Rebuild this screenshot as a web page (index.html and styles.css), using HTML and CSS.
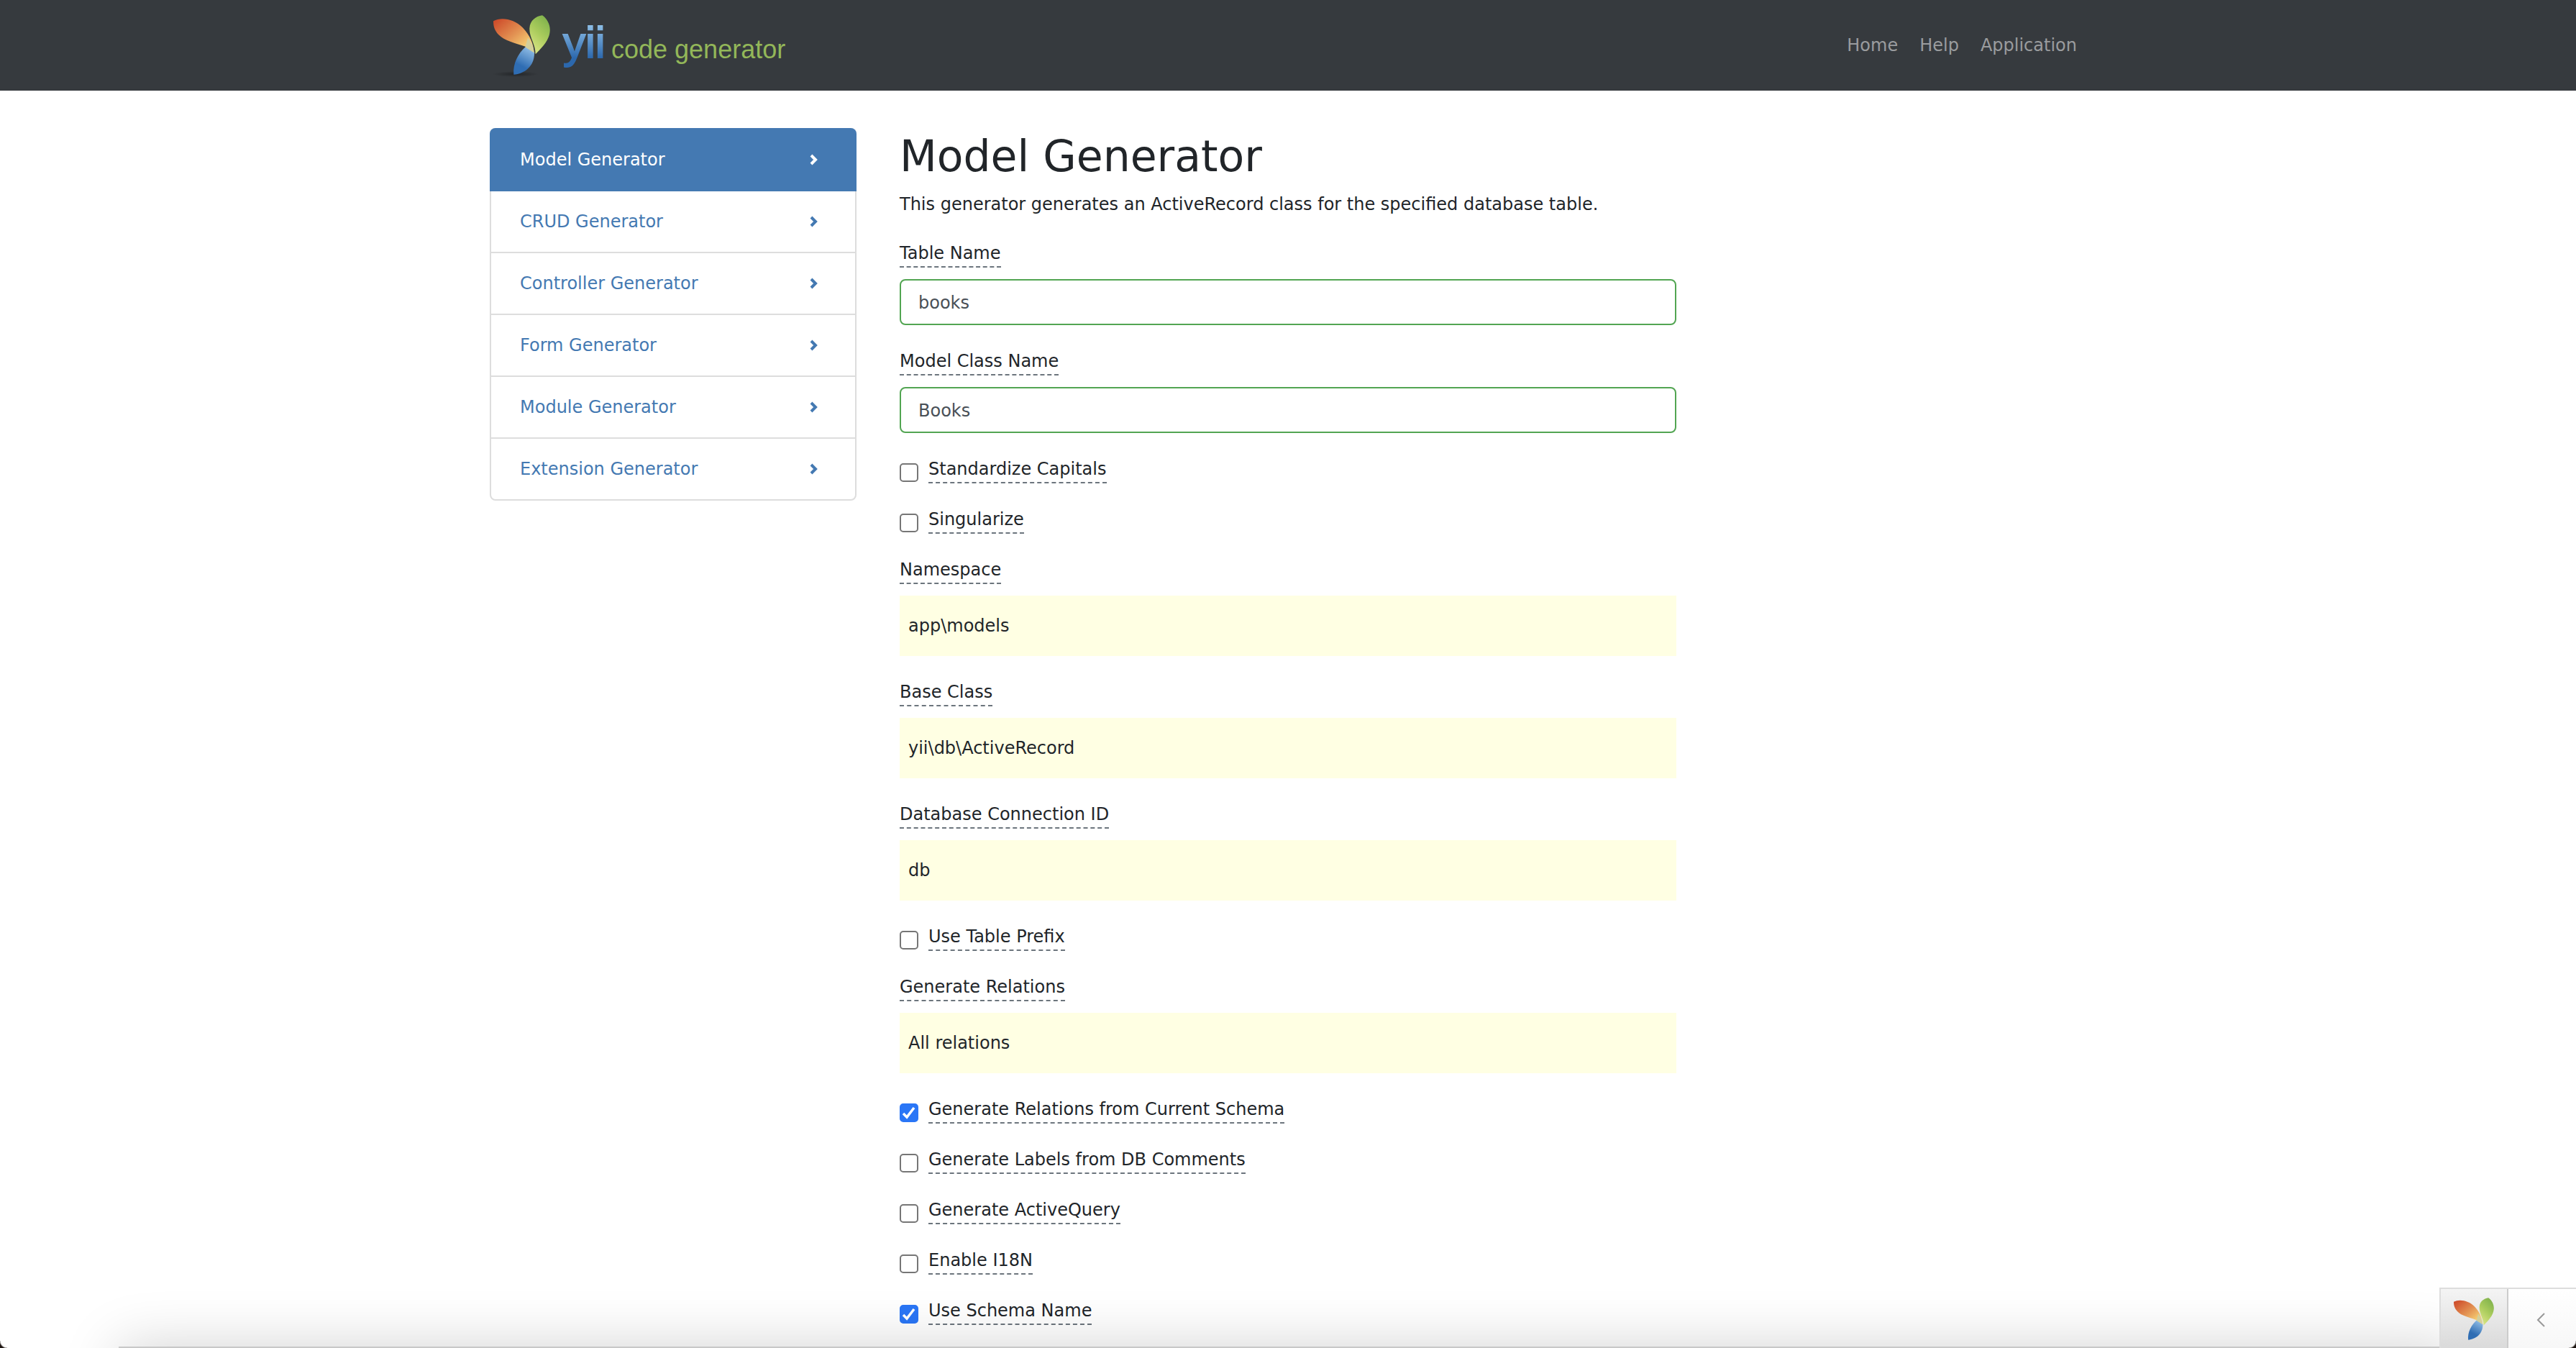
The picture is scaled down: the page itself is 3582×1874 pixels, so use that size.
FILE: index.html
```html
<!DOCTYPE html>
<html lang="en">
<head>
<meta charset="utf-8">
<title>Model Generator</title>
<link rel="stylesheet" href="styles.css">
</head>
<body>
<svg class="defs" aria-hidden="true">
  <defs>
    <linearGradient id="orange" x1="0" y1="0" x2="1" y2="1"><stop offset="0" stop-color="#cc4426"/><stop offset=".5" stop-color="#e39454"/><stop offset=".9" stop-color="#fbe07c"/></linearGradient>
    <linearGradient id="green" x1=".8" y1="0" x2=".3" y2="1"><stop offset="0" stop-color="#7db04b"/><stop offset=".5" stop-color="#a9cb5c"/><stop offset="1" stop-color="#dbe585"/></linearGradient>
    <linearGradient id="blue" x1=".7" y1="0" x2=".3" y2="1"><stop offset="0" stop-color="#8fbce5"/><stop offset=".7" stop-color="#2f6db3"/><stop offset="1" stop-color="#2f6db3"/></linearGradient>
    <linearGradient id="word" gradientUnits="userSpaceOnUse" x1="0" y1="34" x2="0" y2="86"><stop offset="0" stop-color="#8fc0e8"/><stop offset=".9" stop-color="#2c68ad"/></linearGradient>
    <radialGradient id="shade"><stop offset="0" stop-color="#000" stop-opacity=".35"/><stop offset="1" stop-color="#000" stop-opacity="0"/></radialGradient>
    <symbol id="leaves" viewBox="78 64 237 248">
      <path fill="url(#orange)" d="M78 88C112 70 165 80 200 115C232 148 246 185 248 220C238 208 225 200 212 195C160 176 127 172 100 145C82 126 78 108 78 88Z"/>
      <path fill="url(#blue)" d="M211 197C183 222 158 265 163 312C206 308 250 278 249 220C238 207 225 200 211 197Z"/>
      <path fill="#d3cf9c" d="M222 158L211 197L248 221C247 198 236 176 222 158Z"/>
      <path fill="url(#green)" d="M282 64C303 78 316 105 314 130C312 168 278 202 254 226C254 185 227 155 229 118C231 85 255 68 282 64Z"/>
    </symbol>
  </defs>
</svg>

<header class="navbar">
  <div class="container navbar-inner">
    <a class="brand" href="#" aria-label="Yii code generator">
      <svg width="440" height="126" viewBox="0 0 440 126">
        <ellipse cx="36" cy="103" rx="32" ry="4" fill="url(#shade)"/>
        <use href="#leaves" x="5" y="21" width="79" height="83"/>
        <text class="word-yii" x="102" y="80">yii</text>
        <text class="word-code" x="169" y="81">code generator</text>
      </svg>
    </a>
    <nav class="nav">
      <a href="#">Home</a>
      <a href="#">Help</a>
      <a href="#">Application</a>
    </nav>
  </div>
</header>

<div class="container page">
  <aside class="sidebar">
    <nav class="menu">
      <a class="menu-item active" href="#">Model Generator<svg class="chevron" viewBox="0 0 12 16"><path d="M3 2l6 6l-6 6"/></svg></a>
      <a class="menu-item" href="#">CRUD Generator<svg class="chevron" viewBox="0 0 12 16"><path d="M3 2l6 6l-6 6"/></svg></a>
      <a class="menu-item" href="#">Controller Generator<svg class="chevron" viewBox="0 0 12 16"><path d="M3 2l6 6l-6 6"/></svg></a>
      <a class="menu-item" href="#">Form Generator<svg class="chevron" viewBox="0 0 12 16"><path d="M3 2l6 6l-6 6"/></svg></a>
      <a class="menu-item" href="#">Module Generator<svg class="chevron" viewBox="0 0 12 16"><path d="M3 2l6 6l-6 6"/></svg></a>
      <a class="menu-item" href="#">Extension Generator<svg class="chevron" viewBox="0 0 12 16"><path d="M3 2l6 6l-6 6"/></svg></a>
    </nav>
  </aside>
  <main class="content">
    <h1>Model Generator</h1>
    <p class="lead">This generator generates an ActiveRecord class for the specified database table.</p>
    <form class="form">
      <div class="field">
        <label class="help" for="table">Table Name</label>
        <input class="text-input" id="table" type="text" value="books">
      </div>
      <div class="field">
        <label class="help" for="model">Model Class Name</label>
        <input class="text-input" id="model" type="text" value="Books">
      </div>
      <div class="check">
        <input id="capitals" type="checkbox"><label class="help" for="capitals">Standardize Capitals</label>
      </div>
      <div class="check">
        <input id="singular" type="checkbox"><label class="help" for="singular">Singularize</label>
      </div>
      <div class="field">
        <label class="help" for="ns">Namespace</label>
        <output class="sticky-value" id="ns">app\models</output>
      </div>
      <div class="field">
        <label class="help" for="base">Base Class</label>
        <output class="sticky-value" id="base">yii\db\ActiveRecord</output>
      </div>
      <div class="field">
        <label class="help" for="db">Database Connection ID</label>
        <output class="sticky-value" id="db">db</output>
      </div>
      <div class="check">
        <input id="prefix" type="checkbox"><label class="help" for="prefix">Use Table Prefix</label>
      </div>
      <div class="field">
        <label class="help" for="relations">Generate Relations</label>
        <output class="sticky-value" id="relations">All relations</output>
      </div>
      <div class="check">
        <input id="current" type="checkbox" checked><label class="help" for="current">Generate Relations from Current Schema</label>
      </div>
      <div class="check">
        <input id="comments" type="checkbox"><label class="help" for="comments">Generate Labels from DB Comments</label>
      </div>
      <div class="check">
        <input id="query" type="checkbox"><label class="help" for="query">Generate ActiveQuery</label>
      </div>
      <div class="check">
        <input id="i18n" type="checkbox"><label class="help" for="i18n">Enable I18N</label>
      </div>
      <div class="check">
        <input id="schema" type="checkbox" checked><label class="help" for="schema">Use Schema Name</label>
      </div>
    </form>
  </main>
</div>

<div class="bottom-shadow"></div>
<div class="debug-bar">
  <a class="debug-logo" href="#" aria-label="Yii debugger"><svg width="56" height="59"><use href="#leaves"/></svg></a>
  <button class="debug-toggle" type="button" aria-label="Open toolbar"><svg width="12" height="20" viewBox="0 0 12 20"><path d="M11 1L2 10L11 19"/></svg></button>
</div>
<div class="window-corners"></div>
</body>
</html>
```
FILE: styles.css
```css
* { box-sizing: border-box; }

body {
  margin: 0;
  min-height: 100vh;
  background: #fff;
  color: #212529;
  font: 24px/36px Verdana, "DejaVu Sans", sans-serif;
}

a { text-decoration: none; }

.defs { position: absolute; width: 0; height: 0; }

.container {
  max-width: 2280px;
  margin: 0 auto;
}

.navbar { background: #363a3e; }

.navbar-inner {
  display: flex;
  justify-content: space-between;
  align-items: center;
  padding: 0 28px 0 30px;
}

.brand svg { display: block; }

.word-yii {
  font: 62px "Liberation Sans", sans-serif;
  fill: url(#word);
  stroke: url(#word);
  stroke-width: 2px;
}

.word-code {
  font: 36px "Liberation Sans", sans-serif;
  fill: #93b759;
}

.nav { display: flex; }

.nav a {
  padding: 0 15px;
  color: #9a9c9e;
}

.page {
  display: flex;
  padding-top: 52px;
}

.sidebar {
  flex: 0 0 25%;
  padding: 0 30px;
}

.menu {
  border: 2px solid #ddd;
  border-radius: 8px;
}

.menu-item {
  display: flex;
  justify-content: space-between;
  align-items: center;
  padding: 24px 52px 24px 40px;
  border-bottom: 2px solid #ddd;
  color: #4479b2;
}

.menu-item:last-child { border-bottom: 0; }

.menu-item.active {
  margin: -2px -2px 0;
  padding: 26px 54px 24px 42px;
  border-color: #4479b2;
  border-radius: 8px 8px 0 0;
  background: #4479b2;
  color: #fff;
}

.chevron {
  width: 12px;
  height: 16px;
  fill: none;
  stroke: currentColor;
  stroke-width: 4;
}

.content {
  flex: 1;
  min-width: 0;
  padding: 0 30px;
}

h1 {
  margin: 0 0 10px;
  font-size: 60px;
  line-height: 78px;
  font-weight: 400;
}

.lead { margin: 0 0 32px; }

.form {
  width: calc((100% + 60px) * 2 / 3 - 60px);
}

.field {
  display: flex;
  flex-direction: column;
  align-items: flex-start;
  gap: 16px;
  margin-bottom: 32px;
}

.help { border-bottom: 2px dashed #6c757d; }

.text-input {
  width: 100%;
  height: 64px;
  padding: 2px 24px 0;
  border: 2px solid #52a552;
  border-radius: 8px;
  background: #fff;
  color: #495057;
  font: inherit;
}

.sticky-value {
  width: 100%;
  padding: 24px 12px;
  background: #ffffe3;
}

.check {
  display: flex;
  align-items: flex-end;
  gap: 14px;
  margin-bottom: 32px;
}

.check input {
  appearance: none;
  width: 26px;
  height: 26px;
  margin: 0 0 2px;
  border: 2px solid #767676;
  border-radius: 5px;
  background: #fff;
}

.check input:checked {
  border-color: #2a76f6;
  background: #2a76f6 url("data:image/svg+xml,%3Csvg xmlns='http://www.w3.org/2000/svg' viewBox='0 0 22 22'%3E%3Cpath d='M3 12l5 5L18 4' fill='none' stroke='white' stroke-width='3.500'/%3E%3C/svg%3E") center / 22px no-repeat;
}

.bottom-shadow {
  position: fixed;
  z-index: 3;
  left: 165px;
  right: 165px;
  bottom: -98px;
  height: 100px;
  background: #c8c8c8;
  box-shadow: 0 0 80px rgba(0, 0, 0, .18);
  pointer-events: none;
}

.debug-bar {
  position: fixed;
  z-index: 4;
  right: 0;
  bottom: 0;
  display: flex;
  height: 84px;
  border: 2px solid #ddd;
  border-width: 2px 0 0 2px;
  background: linear-gradient(#fff, #f7f7f7);
}

.debug-logo {
  display: flex;
  align-items: center;
  justify-content: center;
  width: 94px;
  border-right: 2px solid #ccc;
  background: linear-gradient(#f4f4f4, #dadada);
}

.debug-toggle {
  width: 94px;
  padding: 6px 4px 0 0;
  border: 0;
  background: none;
}

.debug-toggle path {
  fill: none;
  stroke: #999;
  stroke-width: 2;
}

.window-corners {
  position: fixed;
  z-index: 5;
  inset: auto 0 0;
  height: 10px;
  background:
    radial-gradient(circle at 10px 0, transparent 9px, #1c1410 11px) left / 10px 10px no-repeat,
    radial-gradient(circle at 0 0, transparent 9px, #1c1410 11px) right / 10px 10px no-repeat;
  pointer-events: none;
}
```
